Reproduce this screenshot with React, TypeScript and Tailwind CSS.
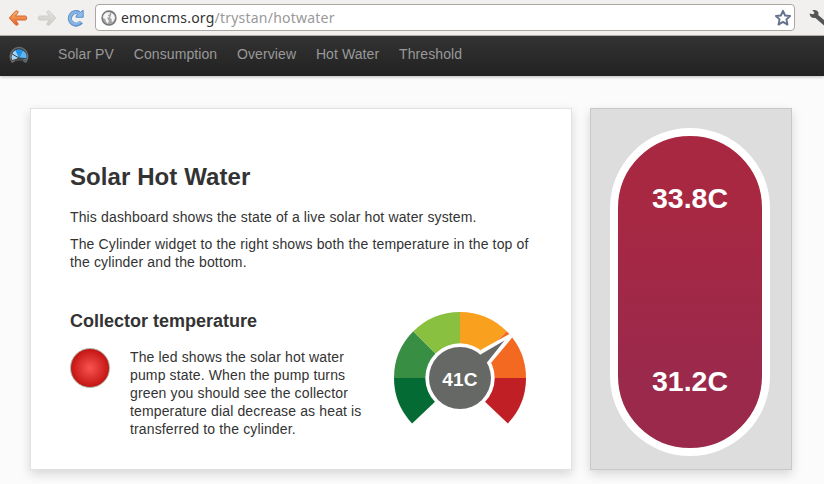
import React from "react";

const navItems = ["Solar PV", "Consumption", "Overview", "Hot Water", "Threshold"];

function ArrowIcon({ flip, from, to, stroke }: { flip?: boolean; from: string; to: string; stroke: string }) {
  const id = flip ? "arrow-forward" : "arrow-back";
  return (
    <svg width="20" height="18" viewBox="0 0 20 18" className={flip ? "shrink-0 -scale-x-100" : "shrink-0"}>
      <defs>
        <linearGradient id={id} x1="0" y1="0" x2="0" y2="1">
          <stop offset="0" stopColor={from} />
          <stop offset="1" stopColor={to} />
        </linearGradient>
      </defs>
      <path
        d="M1.3 9 L7.4 2.2 Q9.5 1 10.2 2.8 Q10.2 3.8 7.4 7 H17.3 Q18.7 7.2 18.7 9 Q18.7 10.8 17.3 11 H7.4 Q10.2 14.2 10.2 15.2 Q9.5 17 7.4 15.8 Z"
        fill={`url(#${id})`}
        stroke={stroke}
        strokeWidth="1"
        strokeLinejoin="round"
      />
    </svg>
  );
}

function ReloadIcon() {
  return (
    <svg width="18" height="18" viewBox="0 0 18 18" className="shrink-0">
      <path d="M14.2 13 A6.2 6.2 0 1 1 12.2 4" fill="none" stroke="#5b8fc9" strokeWidth="4.2" />
      <path d="M16.2 1.2 V8.3 H9 V6.8 Z" fill="#8dbbe9" stroke="#5b8fc9" strokeLinejoin="round" />
      <path d="M13.6 12.6 A5.9 5.9 0 1 1 12.8 4.8" fill="none" stroke="#86b4e4" strokeWidth="2.5" />
    </svg>
  );
}

function GlobeIcon() {
  return (
    <svg width="16" height="16" viewBox="0 0 16 16" className="shrink-0">
      <circle cx="8" cy="8" r="7" fill="#a5a5a5" stroke="#747474" strokeWidth="1.3" />
      <path d="M2.5 5 L5 2.4 L9 2.2 L8.5 4.5 L6.8 5 L8.2 7 L6 8 L7.8 10.5 L7 13.7 L5 11.5 L4.3 9 L2 8 Z" fill="#f6f6f6" />
      <path d="M10.5 2.8 L13 5 L14 8 L12 12 L10.5 11 L10.8 9 L9 8 L10 5.5 Z" fill="#f6f6f6" />
    </svg>
  );
}

function LogoIcon() {
  return (
    <svg width="22" height="20" viewBox="0 0 22 20" className="shrink-0">
      <path
        d="M4.2 16 A8.8 8.8 0 1 1 17.8 16 L15 14.3 H7 Z"
        fill="#353535"
        stroke="#6c6c6c"
        strokeWidth="1.5"
        strokeLinejoin="round"
      />
      <path d="M4.2 14 A7.3 7.3 0 0 1 8 4 L11 12 Z" fill="#a5d6f7" />
      <path d="M7.3 4.4 A7.5 7.5 0 0 1 15 4.4 L11.2 12 Z" fill="#1f92ee" />
      <path d="M15 4.4 A7.5 7.5 0 0 1 18 14 L11 12 Z" fill="#5db5f3" />
      <path d="M3.8 7.8 L11 12 M11 12 L18 12.6" fill="none" stroke="#292929" strokeWidth="0.9" />
      <path d="M6 15 L11 11.5 L16 15 Z" fill="#484848" />
    </svg>
  );
}

function StarIcon() {
  return (
    <svg width="18" height="18" viewBox="0 0 18 18" className="shrink-0">
      <path
        d="M9 1.8 L11.1 6.5 L16.1 7 L12.4 10.4 L13.5 15.6 L9 12.9 L4.5 15.6 L5.6 10.4 L1.9 7 L6.9 6.5 Z"
        fill="#fff"
        stroke="#65728d"
        strokeWidth="1.9"
        strokeLinejoin="round"
      />
    </svg>
  );
}

function WrenchIcon() {
  return (
    <svg width="16" height="18" viewBox="0 0 16 18" className="shrink-0">
      <path
        d="M0.5 4.5 L4.2 5.2 L5.6 3.8 L3.2 1.2 Q8.2 0 9.4 3.6 Q9.6 5 9.2 6 L16 12 V17.5 L6.4 9 Q1.5 9.8 0.5 4.5 Z"
        fill="#555"
      />
    </svg>
  );
}

const segments = [
  { color: "#046b34", from: 136.5, to: 180 },
  { color: "#388e43", from: 180, to: 225 },
  { color: "#8ac03f", from: 225, to: 270 },
  { color: "#f9a11e", from: 270, to: 315 },
  { color: "#f46922", from: 315, to: 360 },
  { color: "#bf1f25", from: 0, to: 43.5 },
];

function wedge(from: number, to: number) {
  const point = (deg: number) => {
    const a = (deg * Math.PI) / 180;
    return `${66 * Math.cos(a)} ${66 * Math.sin(a)}`;
  };
  return `M0 0 L${point(from)} A66 66 0 0 1 ${point(to)} Z`;
}

function Gauge() {
  return (
    <svg width="134" height="114" viewBox="-67 -67 134 114" className="shrink-0">
      {segments.map((s) => (
        <path key={s.from} d={wedge(s.from, s.to)} fill={s.color} />
      ))}
      <circle r="34.7" fill="#fff" />
      <path d="M20.5 -28 L49.5 -44 L52.2 -40.5 L31 -15 Z" fill="#fff" />
      <circle r="31" fill="#666866" />
      <path d="M20.5 -23.5 L44.5 -37.5 L27 -15.5 L15 -10 Z" fill="#666866" />
      <text y="8.3" textAnchor="middle" fontSize="19" className="fill-white font-bold">
        41C
      </text>
    </svg>
  );
}

export default function App() {
  return (
    <div className="flex h-[484px] w-[824px] flex-col overflow-hidden bg-[#fbfbfb] font-['Liberation_Sans',Arial,sans-serif] text-[14px] text-[#333]">
      <header className="flex h-9 shrink-0 items-center border-b border-[#b8b6b3] bg-[#f1f0ef] pl-2">
        <ArrowIcon from="#f8b56e" to="#e2622a" stroke="#d96531" />
        <div className="ml-[9px] flex shrink-0">
          <ArrowIcon flip from="#e5e3e0" to="#cecbc7" stroke="#cfccc8" />
        </div>
        <div className="ml-[10px] flex shrink-0">
          <ReloadIcon />
        </div>
        <div className="ml-[10px] flex h-[27px] w-[700px] shrink-0 items-center rounded-[4px] border border-[#a9a7a0] bg-white pr-[2px] pl-[5px]">
          <GlobeIcon />
          <span className="ml-1 flex-1 font-['Noto_Sans',sans-serif] text-[14px] tracking-[0.22px] whitespace-nowrap text-[#999]">
            <span className="text-[#333]">emoncms.org</span>/trystan/hotwater
          </span>
          <StarIcon />
        </div>
        <div className="ml-[14px] flex w-[15px] shrink-0 overflow-hidden">
          <WrenchIcon />
        </div>
      </header>

      <nav className="flex h-10 shrink-0 items-center bg-linear-to-b from-[#333] to-[#222] pl-2 leading-[18px] text-[#999] shadow-[0_1px_3px_rgba(0,0,0,0.25)]">
        <LogoIcon />
        <div className="mb-[5px] ml-7 flex gap-[19.8px] tracking-[0.09px]">
          {navItems.map((item) => (
            <a key={item}>{item}</a>
          ))}
        </div>
      </nav>

      <main className="flex gap-[18px] pt-8 pl-[30px]">
        <section className="h-[362px] w-[542px] border border-[#e2e2e2] bg-white pt-[54px] pl-[39px] leading-[18px] tracking-[0.14px] shadow-[0_4px_10px_rgba(0,0,0,0.15)]">
          <h1 className="text-[24px] leading-[28px] font-bold tracking-[0.08px]">Solar Hot Water</h1>
          <p className="mt-[17px]">This dashboard shows the state of a live solar hot water system.</p>
          <p className="mt-[9px] w-[470px]">
            The Cylinder widget to the right shows both the temperature in the top of the cylinder and the bottom.
          </p>
          <div className="mt-[40px] flex">
            <div className="w-[323px]">
              <h2 className="text-[18px] leading-[20px] font-bold tracking-normal">Collector temperature</h2>
              <div className="mt-[17px] flex gap-5">
                <div className="size-10 shrink-0 rounded-full border border-[#a9b5a0] bg-[radial-gradient(circle,#f95450_0%,#c41614_70%)]" />
                <p className="w-[240px]">
                  The led shows the solar hot water pump state. When the pump turns green you should see the collector
                  temperature dial decrease as heat is transferred to the cylinder.
                </p>
              </div>
            </div>
            <Gauge />
          </div>
        </section>

        <section className="h-[362px] w-[202px] border border-[#c8c8c8] bg-[#ddd] px-5 pt-[19px] shadow-[0_4px_10px_rgba(0,0,0,0.15)]">
          <div className="-ml-px flex h-[328px] w-[160px] flex-col items-center justify-between rounded-full border-8 border-white bg-[linear-gradient(#a82842_20%,#9a294c_80%)] pt-[45px] pb-[50px] text-[28.5px] leading-[34px] font-bold text-white">
            <span>33.8C</span>
            <span>31.2C</span>
          </div>
        </section>
      </main>
    </div>
  );
}
